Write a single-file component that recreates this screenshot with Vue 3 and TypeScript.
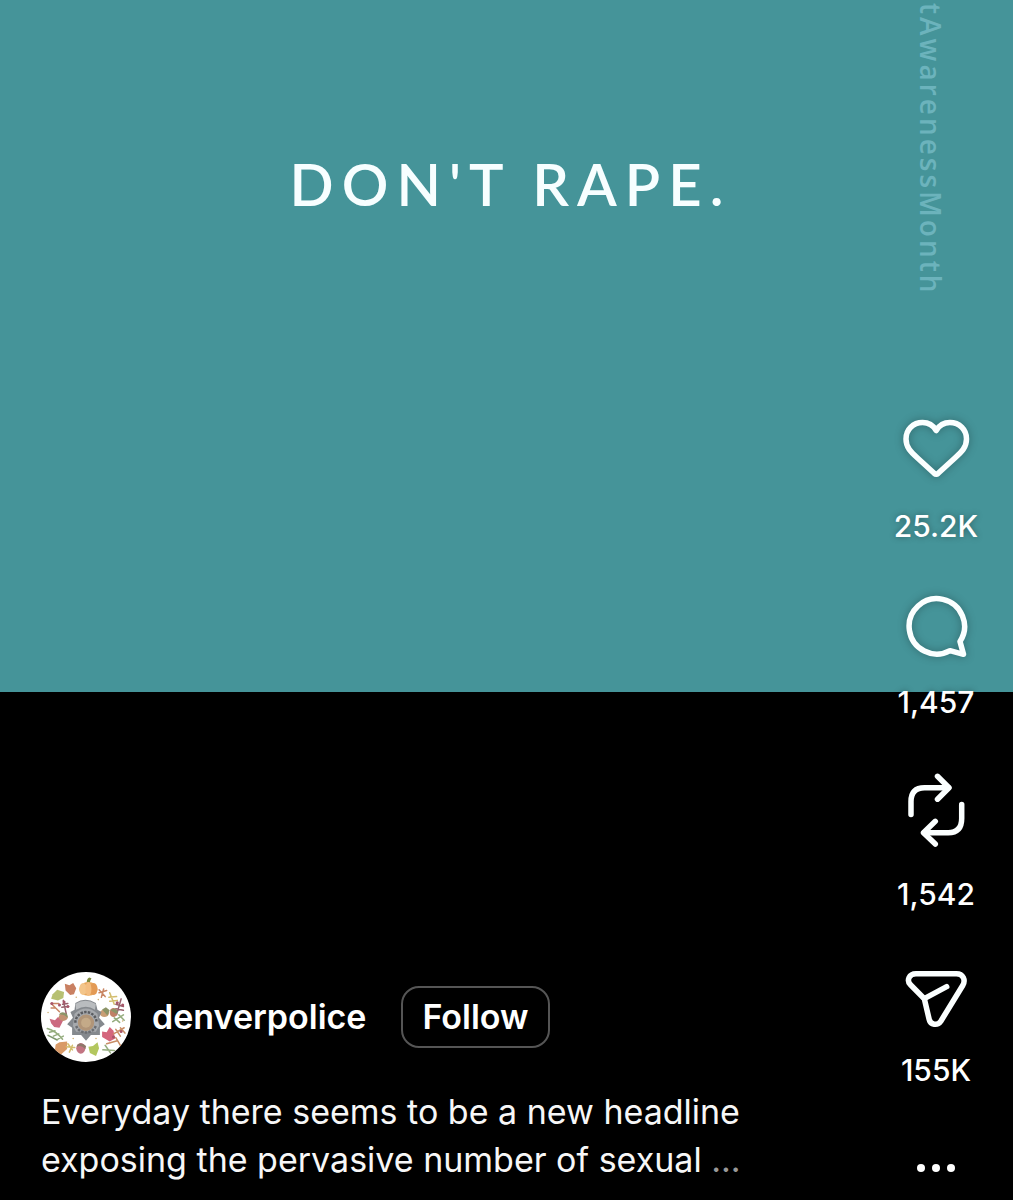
<script setup lang="ts">
import { ref } from 'vue'

interface Action {
  name: string
  count: string
  height: number
  paths: string[]
}

const actions: Action[] = [
  {
    name: 'Like',
    count: '25.2K',
    height: 72,
    paths: [
      'M36.2 14.500C33.2 9.500 28.4 6.6 22.6 6.6C13 6.6 6 13.6 6 23C6 31.5 10.8 36 17.5 42L34.2 57.3Q36.2 59 38.2 57.3L54.9 42C61.6 36 66.5 31.5 66.5 23C66.5 13.6 59.5 6.6 49.9 6.6C44 6.6 39.2 9.500 36.2 14.500Z'
    ]
  },
  {
    name: 'Comment',
    count: '1,457',
    height: 72,
    paths: ['M60 49.5A27.7 27.7 0 1 0 50 58.7L63.5 62.3Z']
  },
  {
    name: 'Repost',
    count: '1,542',
    height: 88,
    paths: [
      'M11 46.5V33.5Q11 19.7 24.5 19.7H48.5',
      'M37.5 8.3L49 19.7L37.5 31.2',
      'M61.7 36.5V50.5Q61.7 64.7 48.2 64.7H24',
      'M35.3 53.3L23.5 64.7L35.3 76'
    ]
  },
  {
    name: 'Share',
    count: '155K',
    height: 72,
    paths: [
      'M16 13.7H56.5C63 13.7 66 20 62.7 25.5L40.8 61.2C37.5 66 30.5 65 29.2 59.5L24.3 38.7L10.5 24.8C6.3 20.5 9 13.7 16 13.7Z',
      'M24.3 38.7L46.7 26.7'
    ]
  }
]

const following = ref(false)
</script>

<template>
  <main class="reel">
    <section class="post">
      <p class="headline">DON'T RAPE.</p>
      <p class="hashtag">tAwarenessMonth</p>
    </section>

    <div class="overlay">
      <section class="details">
        <div class="author">
          <svg class="avatar" viewBox="0 0 110 110" role="img" aria-label="denverpolice profile picture">
            <circle cx="55" cy="55" r="55" fill="#fff" />
            <g transform="translate(4 4) scale(.93)">
              <!-- pumpkin -->
              <path d="M56 12Q55 5 59 3L62 4Q59 8 60 13Z" fill="#7f8a3c" />
              <ellipse cx="58" cy="18" rx="12" ry="9" fill="#e9a75c" />
              <ellipse cx="51" cy="18" rx="5" ry="8" fill="#f3c58a" />
              <ellipse cx="65" cy="18" rx="5" ry="8" fill="#e39a55" />
              <ellipse cx="58" cy="18" rx="4" ry="9" fill="#f3bd80" />
              <!-- leaves -->
              <path d="M27 11L33 13L38 10L42 17L39 25L34 26L28 20Z" fill="#c98062" />
              <path d="M11 25L17 19L26 22L25 30L18 33L9 31Z" fill="#b7c072" />
              <path d="M7 57L14 59L18 55L25 59L20 69L13 68L9 63Z" fill="#cc6a80" />
              <path d="M76 74L82 75L86 68L91 73L93 83L86 87L76 81Z" fill="#d4667d" />
              <path d="M15 91L20 88L30 87L30 97L22 104L14 98Z" fill="#d99a68" />
              <path d="M58 94L64 93L70 88L72 96L68 106L60 102Z" fill="#b3c75f" />
              <!-- sprigs -->
              <g fill="none" stroke-width="2" stroke-linecap="round">
                <path d="M9 37L20 48M10 37H19M9 43L15 43M72 19L80 28M72 23L82 20M78 18L75 29" stroke="#c98765" />
                <path d="M29 51L25 33M24 38L31 37M23 42L32 41M95 52L101 31M94 38L104 41M94 44L104 46" stroke="#98616d" />
                <path d="M86 23L92 38M85 29L95 28M86 34L96 33M31 90L37 98M29 94L40 95M33 101L37 92" stroke="#d3bd6d" />
                <path d="M4 70Q15 73 24 84M7 75L14 73M12 80L19 77M18 84L25 80M90 61L104 52M92 56L99 62M98 52L105 59M77 98L92 99M80 92L87 102" stroke="#94ac7d" />
                <path d="M91 77L105 69M94 71L100 80M100 69L106 76M82 90L96 86M94 82L100 92" stroke="#c98e67" />
                <path d="M5 79L17 85" stroke="#7c966d" />
              </g>
              <!-- berries -->
              <g fill="#a8566a">
                <circle cx="10" cy="37" r="2" /><circle cx="20" cy="39" r="2" />
                <circle cx="26" cy="35" r="2" /><circle cx="31" cy="41" r="2" />
                <circle cx="96" cy="36" r="2" /><circle cx="103" cy="39" r="2" />
                <circle cx="101" cy="74" r="2" /><circle cx="91" cy="81" r="2" />
              </g>
              <!-- acorns -->
              <ellipse cx="25" cy="55" rx="6" ry="5" fill="#c39272" />
              <path d="M19 52Q23 46 30 51L31 56Q25 50 19 52Z" fill="#8c9468" />
              <ellipse cx="79" cy="50" rx="6" ry="5" fill="#c99e75" />
              <ellipse cx="91" cy="49" rx="5" ry="6" fill="#c08066" />
              <path d="M76 45L81 42L86 46L83 53ZM87 46Q93 41 97 48L95 51Z" fill="#8c9468" />
              <ellipse cx="48" cy="96" rx="6" ry="7" fill="#c27482" />
              <path d="M43 92Q47 87 55 93L54 97Q48 91 43 94Z" fill="#8f776a" />
              <g fill="#cfae70">
                <circle cx="42" cy="29" r="1" /><circle cx="71" cy="32" r="1" />
                <circle cx="38" cy="83" r="1" /><circle cx="68" cy="83" r="1" />
                <circle cx="5" cy="49" r="1" /><circle cx="103" cy="60" r="1" />
              </g>
            </g>
            <!-- police badge -->
            <path d="M42 38Q54 30 67 38L69 46L74 49L71 56L78 64L72 68V77L61 77L55 84L49 77H38V68L32 64L39 56L36 49L41 46Z" fill="#85898e" />
            <path d="M42 39Q54 31 67 39L66 46Q55 39 43 46Z" fill="#b9bcbf" />
            <path d="M41 51Q55 38 69 51L71 66L67 73H43L39 66Z" fill="#a6a9ad" />
            <path d="M42 62A13 13 0 1 1 68 62" fill="none" stroke="#5a5c60" stroke-width="3" stroke-dasharray="3 1.5" />
            <path d="M43 66A13 13 0 0 0 67 66" fill="none" stroke="#6b6d71" stroke-width="3" stroke-dasharray="3 1.5" />
            <circle cx="55" cy="62" r="10" fill="#b19578" />
            <circle cx="55" cy="62" r="6" fill="#c4aa88" />
          </svg>
          <a class="username" href="#denverpolice">denverpolice</a>
          <button class="follow" type="button" :aria-pressed="following" @click="following = !following">
            Follow
          </button>
        </div>
        <p class="caption">
          Everyday there seems to be a new headline<br />exposing the pervasive number of sexual
          <span class="more">...</span>
        </p>
      </section>

      <nav class="rail" aria-label="Post actions">
        <button v-for="action in actions" :key="action.name" class="action" type="button" :aria-label="action.name">
          <svg class="icon" width="72" :height="action.height" :viewBox="`0 0 72 ${action.height}`" aria-hidden="true">
            <path v-for="d in action.paths" :key="d" :d="d" />
          </svg>
          <span class="count">{{ action.count }}</span>
        </button>
        <button class="action" type="button" aria-label="More options">
          <svg class="dots" width="72" height="64" viewBox="0 0 72 64" aria-hidden="true">
            <circle cx="21" cy="32" r="4" />
            <circle cx="36" cy="32" r="4" />
            <circle cx="51" cy="32" r="4" />
          </svg>
        </button>
      </nav>
    </div>
  </main>
</template>

<style>
body {
  margin: 0;
  background: #000;
}
</style>

<style scoped>
.reel {
  display: grid;
  min-height: 100vh;
  background: #000;
  color: #fff;
  font-family: Inter, "Liberation Sans", sans-serif;
}

.post,
.overlay {
  grid-area: 1 / 1;
}

.post {
  display: grid;
  grid-template-columns: 1fr auto 1fr;
  align-items: start;
  align-self: start;
  background: #459499;
  padding-bottom: 396px;
}

.headline {
  grid-column: 2;
  margin: 0;
  padding: 148px 0 0 8px;
  font-family: Lato, sans-serif;
  font-size: 58px;
  font-weight: 600;
  line-height: 72px;
  letter-spacing: 8px;
  color: #f7feff;
}

.hashtag {
  grid-column: 3;
  justify-self: end;
  display: flex;
  justify-content: flex-end;
  height: 296px;
  margin: 0 64px 0 0;
  overflow: hidden;
  writing-mode: vertical-rl;
  white-space: nowrap;
  font-family: "Open Sans", sans-serif;
  font-size: 28px;
  font-weight: 600;
  line-height: 36px;
  letter-spacing: 3px;
  color: #6cb3bc;
}

.overlay {
  display: flex;
  align-items: flex-end;
  justify-content: space-between;
}

.details {
  padding: 0 0 16px 41px;
}

.author {
  display: flex;
  align-items: center;
}

.avatar {
  width: 90px;
  height: 90px;
}

.username {
  margin: 0 35px 0 21px;
  color: inherit;
  font-size: 34px;
  font-weight: 600;
  line-height: 48px;
  text-decoration: none;
}

.follow {
  padding: 4px 19px;
  border: 2px solid #555;
  border-radius: 18px;
  background: transparent;
  color: inherit;
  font: 600 34px/50px Inter, "Liberation Sans", sans-serif;
}

.caption {
  margin: 26px 0 0;
  font-size: 34px;
  line-height: 48px;
  color: #f7f7f7;
}

.more {
  color: #999;
}

.rail {
  display: flex;
  flex-direction: column;
  gap: 48px;
  padding-right: 28px;
}

.action {
  display: flex;
  flex-direction: column;
  align-items: center;
  gap: 20px;
  width: 98px;
  padding: 0;
  border: 0;
  background: none;
  color: inherit;
  font: 500 30px/36px Inter, "Liberation Sans", sans-serif;
}

.icon {
  fill: none;
  stroke: #fbffff;
  stroke-width: 5.5;
  stroke-linecap: round;
  stroke-linejoin: round;
  filter: drop-shadow(0 0 4px rgb(0 0 0 / 30%));
}

.dots {
  fill: #fff;
}

.count {
  text-shadow: 0 0 6px rgb(0 0 0 / 35%);
}
</style>
